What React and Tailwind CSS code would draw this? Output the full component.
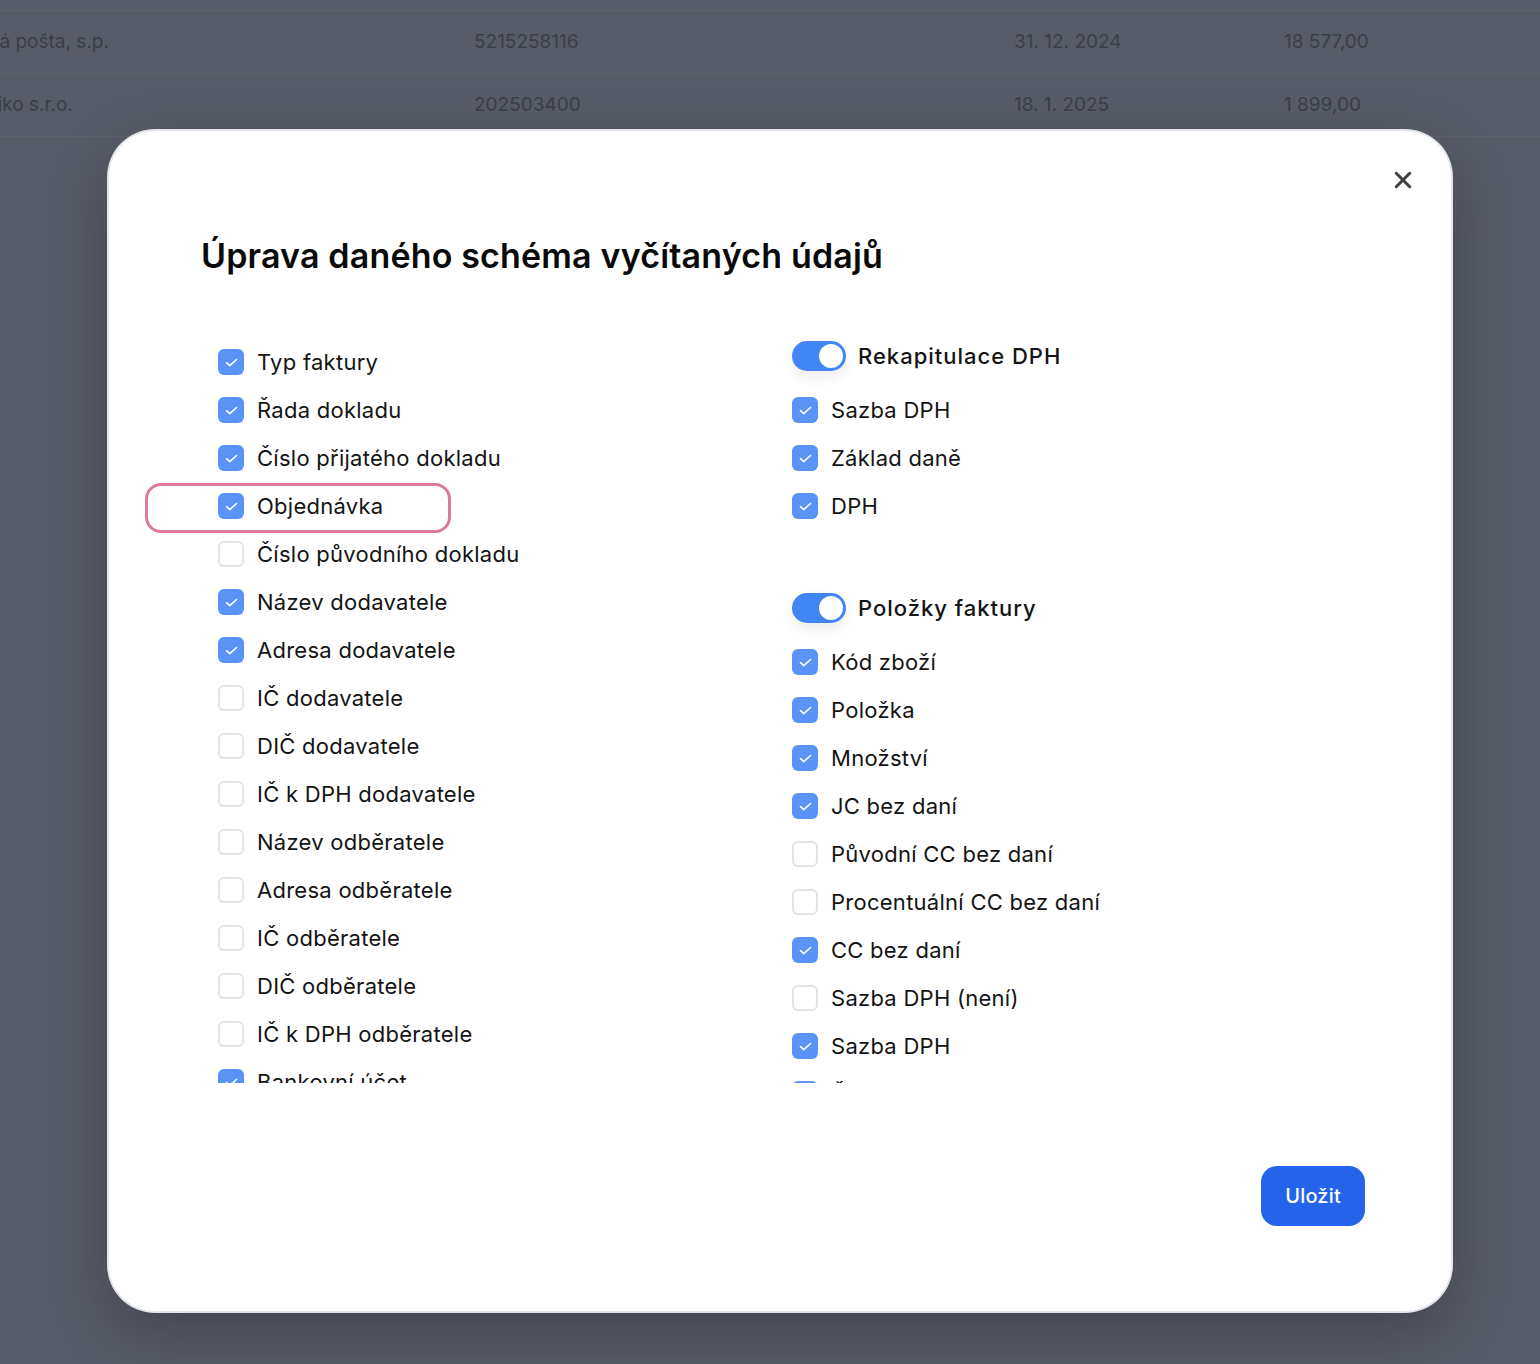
import { useState } from 'react'

const leftItems = [
  ['Typ faktury', true],
  ['Řada dokladu', true],
  ['Číslo přijatého dokladu', true],
  ['Objednávka', true, true],
  ['Číslo původního dokladu', false],
  ['Název dodavatele', true],
  ['Adresa dodavatele', true],
  ['IČ dodavatele', false],
  ['DIČ dodavatele', false],
  ['IČ k DPH dodavatele', false],
  ['Název odběratele', false],
  ['Adresa odběratele', false],
  ['IČ odběratele', false],
  ['DIČ odběratele', false],
  ['IČ k DPH odběratele', false],
  ['Bankovní účet', true],
  ['Kód banky', false],
]

const sections = [
  {
    title: 'Rekapitulace DPH',
    items: [
      ['Sazba DPH', true],
      ['Základ daně', true],
      ['DPH', true],
    ],
  },
  {
    title: 'Položky faktury',
    items: [
      ['Kód zboží', true],
      ['Položka', true],
      ['Množství', true],
      ['JC bez daní', true],
      ['Původní CC bez daní', false],
      ['Procentuální CC bez daní', false],
      ['CC bez daní', true],
      ['Sazba DPH (není)', false],
      ['Sazba DPH', true],
      ['Částka DPH', true],
      ['CC s daní', true],
    ],
  },
]

// řádky tabulky v pozadí (stránka je posunutá doleva)
const rows = [
  ['Česká pošta, s.p.', '5215258116', '31. 12. 2024', '18 577,00'],
  ['Plastiko s.r.o.', '202503400', '18. 1. 2025', '1 899,00'],
]

function Checkbox({ checked }) {
  return checked ? (
    <span className="flex h-[26px] w-[26px] shrink-0 items-center justify-center rounded-[6px] bg-[#5a93f6]">
      <svg width="13" height="9" viewBox="0 0 13 9" fill="none">
        <path d="M1.5 4.6 4.8 7.6 11.5 1.5" stroke="white" strokeWidth="1.6" strokeLinecap="round" strokeLinejoin="round" />
      </svg>
    </span>
  ) : (
    <span className="h-[26px] w-[26px] shrink-0 rounded-[6px] border-2 border-[#dfe2e7] bg-white" />
  )
}

function Row({ label, checked, marked }) {
  return (
    <div className="relative flex h-12 items-center gap-[13px]">
      {marked && (
        <div className="absolute -left-[73px] top-[1px] h-[50px] w-[306px] rounded-[16px] border-[3px] border-[#db7a9b]" />
      )}
      <Checkbox checked={checked} />
      <span className="text-[22px] leading-none tracking-[0.012em] text-[#141414]">{label}</span>
    </div>
  )
}

function Toggle() {
  return (
    <span className="flex h-[30px] w-[54px] shrink-0 items-center justify-end rounded-full bg-[#4285f4] pr-[3px] shadow-[0_6px_14px_rgba(0,0,0,0.08)]">
      <span className="h-[24px] w-[24px] rounded-full bg-white" />
    </span>
  )
}

export default function App() {
  const [open] = useState(true)

  return (
    <div className="relative h-[1364px] w-full overflow-hidden bg-[#585c68] font-['Inter',sans-serif]">
      <div className="mt-[10px] border-t border-[#5f636e]">
        {rows.map((r) => (
          <div key={r[1]} className="flex h-[63px] items-center border-b border-[#5f636e] text-[19px] text-[#3a3e49]">
            <span className="-ml-[46px] w-[520px] whitespace-nowrap">{r[0]}</span>
            <span className="w-[540px]">{r[1]}</span>
            <span className="w-[270px]">{r[2]}</span>
            <span>{r[3]}</span>
          </div>
        ))}
      </div>

      {open && (
        <div className="absolute left-[109px] top-[131px] flex h-[1180px] w-[1342px] flex-col rounded-[46px] bg-white px-[92px] pt-[105px] pb-[85px] ring-2 ring-[#e3e5e9] shadow-[0_20px_60px_rgba(0,0,0,0.25)]">
          <button className="absolute right-[39px] top-[40px] flex h-[18px] w-[18px] items-center justify-center text-[#404040]">
            <svg width="20" height="20" viewBox="0 0 20 20" fill="none">
              <path d="M2.5 2.5 17.5 17.5M17.5 2.5 2.5 17.5" stroke="currentColor" strokeWidth="3.4" strokeLinecap="round" />
            </svg>
          </button>

          <h2 className="h-10 text-[34px] font-semibold leading-10 tracking-[0.005em] text-[#0a0a0a]">
            Úprava daného schéma vyčítaných údajů
          </h2>

          <div className="-ml-[60px] mt-[62px] grid h-[745px] grid-cols-[574px_1fr] overflow-hidden pl-[77px]">
            <div>
              {leftItems.map(([label, checked, marked]) => (
                <Row key={label} label={label} checked={checked} marked={marked} />
              ))}
            </div>
            <div className="flex flex-col gap-[60px]">
              {sections.map((s) => (
                <div key={s.title}>
                  <div className="mb-3 flex h-9 items-center gap-3">
                    <Toggle />
                    <span className="text-[22px] font-medium leading-none tracking-[0.045em] text-[#141414]">{s.title}</span>
                  </div>
                  {s.items.map(([label, checked], i) => (
                    <Row key={label + i} label={label} checked={checked} />
                  ))}
                </div>
              ))}
            </div>
          </div>

          <div className="mt-auto flex justify-end">
            <button className="-mr-[6px] h-[60px] rounded-[16px] bg-[#2563eb] px-[24px] text-[20px] font-medium tracking-[0.01em] text-white">
              Uložit
            </button>
          </div>
        </div>
      )}
    </div>
  )
}
